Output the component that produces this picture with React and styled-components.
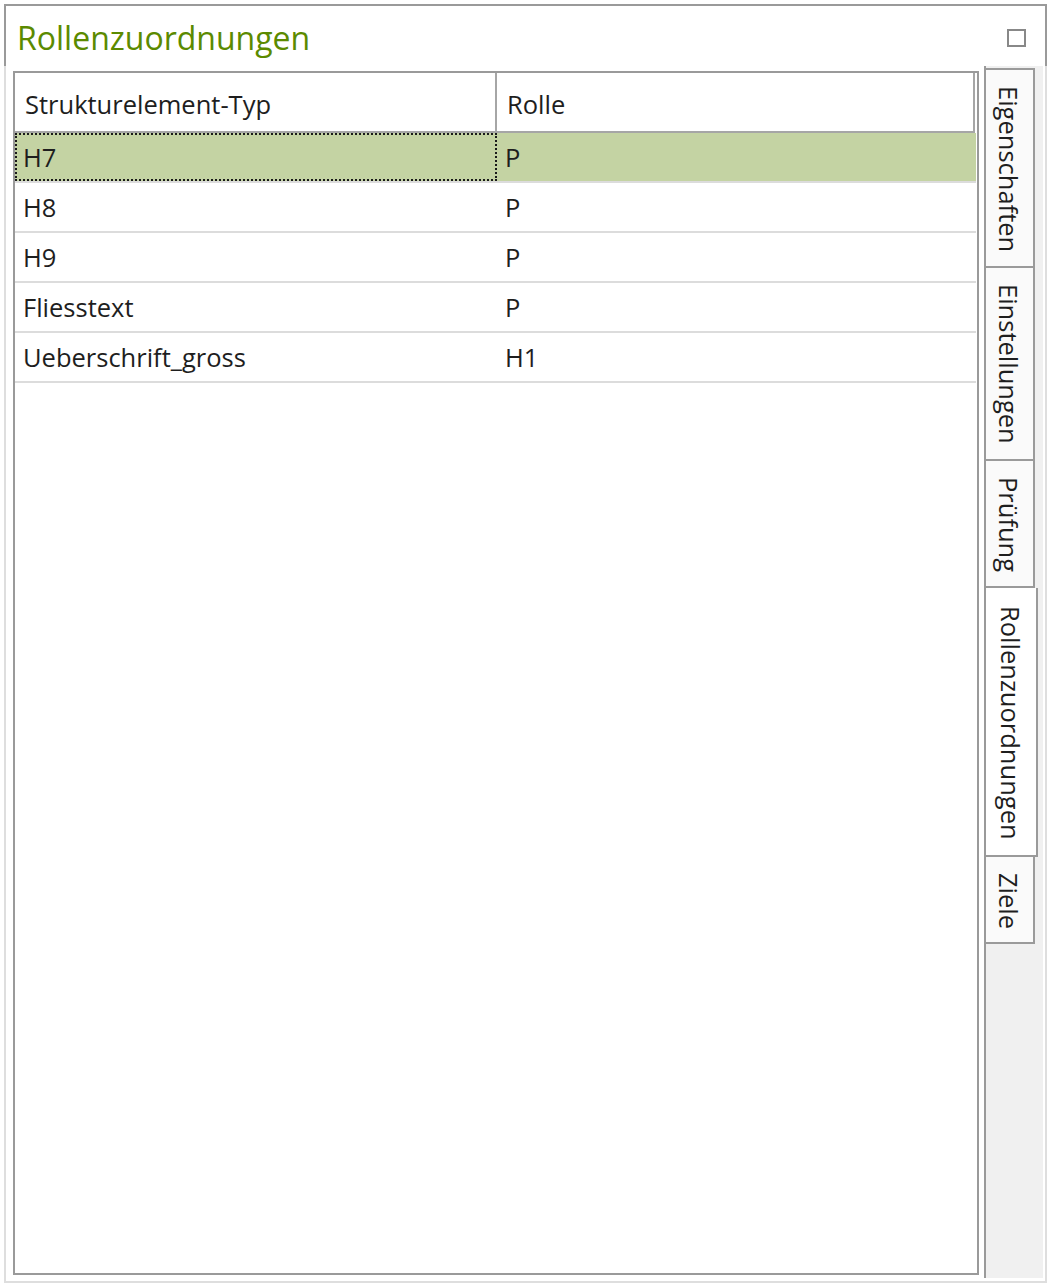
import React from "react";
import styled, { createGlobalStyle } from "styled-components";

const GlobalStyle = createGlobalStyle`
  html, body {
    margin: 0;
    padding: 0;
    background: #ffffff;
  }
  body {
    font-family: "Open Sans", "Noto Sans", "Liberation Sans", sans-serif;
    color: #1e1e1e;
  }
`;

const Frame = styled.div`
  margin: 4px 4px 3px 4px;
  width: 1043px;
  height: 1279px;
  display: flex;
  flex-direction: column;
  box-sizing: border-box;
`;

const Header = styled.div`
  height: 62px;
  flex: none;
  box-sizing: border-box;
  border: 2px solid #9a9a9a;
  border-bottom: none;
  display: flex;
  align-items: center;
  justify-content: space-between;
  padding: 0 19px 0 11px;
`;

const Title = styled.h1`
  margin: 0;
  font-size: 32px;
  font-weight: 400;
  color: #5b8a00;
  line-height: 1;
  padding-top: 4px;
`;

const MaxButton = styled.span`
  width: 19px;
  height: 18px;
  box-sizing: border-box;
  border: 2px solid #888;
  margin-top: 4px;
`;

const Body = styled.div`
  flex: 1;
  display: flex;
  box-sizing: border-box;
  border: 2px solid #dedede;
  border-top: none;
  padding-left: 7px;
`;

const TablePanel = styled.div`
  width: 966px;
  margin: 5px 0 6px 0;
  box-sizing: border-box;
  border: 2px solid #9a9a9a;
  background: #fff;
  padding-right: 1px;
`;

const Row = styled.div`
  display: grid;
  grid-template-columns: 482px 1fr;
  height: ${(p) => (p.$head ? "60px" : "50px")};
  box-sizing: border-box;
  border-bottom: 2px solid ${(p) => (p.$head ? "#a6a6a6" : "#dcdcdc")};
  background: ${(p) => (p.$selected ? "#c4d3a3" : "#fff")};
  margin-right: ${(p) => (p.$head ? "1px" : "0")};
`;

const Cell = styled.div`
  display: flex;
  align-items: center;
  box-sizing: border-box;
  padding-left: ${(p) => (p.$head ? "10px" : "8px")};
  font-size: 25.5px;
  white-space: nowrap;
  border-right: ${(p) => (p.$head ? "2px solid #a6a6a6" : "none")};
  outline: ${(p) => (p.$focus ? "2px dotted #1a1a1a" : "none")};
  outline-offset: -2px;
  padding-top: ${(p) => (p.$head ? "3px" : "0")};
`;

const Strip = styled.div`
  width: 59px;
  margin: 0 0 3px 5px;
  box-sizing: border-box;
  border-left: 2px solid #9a9a9a;
  background: #f0f0f0;
  display: flex;
  flex-direction: column;
  padding-top: 2px;
`;

const Tab = styled.div`
  width: ${(p) => (p.$active ? "52px" : "49px")};
  box-sizing: border-box;
  border: 2px solid #9a9a9a;
  border-left: none;
  border-top: ${(p) => (p.$first ? "2px solid #9a9a9a" : "none")};
  background: ${(p) => (p.$active ? "#ffffff" : "#fafafa")};
  height: ${(p) => p.$h}px;
  display: flex;
  justify-content: center;
  padding-top: ${(p) => (p.$active ? "18px" : "16px")};
`;

const TabLabel = styled.span`
  writing-mode: vertical-rl;
  font-size: 25.5px;
  color: #1e1e1e;
  line-height: 1;
  margin-left: ${(p) => (p.$active ? "-1px" : "-2px")};
`;

const rows = [
  ["H7", "P"],
  ["H8", "P"],
  ["H9", "P"],
  ["Fliesstext", "P"],
  ["Ueberschrift_gross", "H1"],
];

const tabs = [
  { label: "Eigenschaften", h: 200 },
  { label: "Einstellungen", h: 193 },
  { label: "Prüfung", h: 127 },
  { label: "Rollenzuordnungen", h: 269, active: true },
  { label: "Ziele", h: 87 },
];

export default function App() {
  return (
    <>
      <GlobalStyle />
      <Frame>
        <Header>
          <Title>Rollenzuordnungen</Title>
          <MaxButton />
        </Header>
        <Body>
          <TablePanel>
            <Row $head>
              <Cell $head>Strukturelement-Typ</Cell>
              <Cell $head>Rolle</Cell>
            </Row>
            {rows.map(([typ, rolle], i) => (
              <Row key={typ} $selected={i === 0}>
                <Cell $focus={i === 0}>{typ}</Cell>
                <Cell>{rolle}</Cell>
              </Row>
            ))}
          </TablePanel>
          <Strip>
            {tabs.map((t, i) => (
              <Tab key={t.label} $first={i === 0} $active={t.active} $h={t.h}>
                <TabLabel $active={t.active}>{t.label}</TabLabel>
              </Tab>
            ))}
          </Strip>
        </Body>
      </Frame>
    </>
  );
}
